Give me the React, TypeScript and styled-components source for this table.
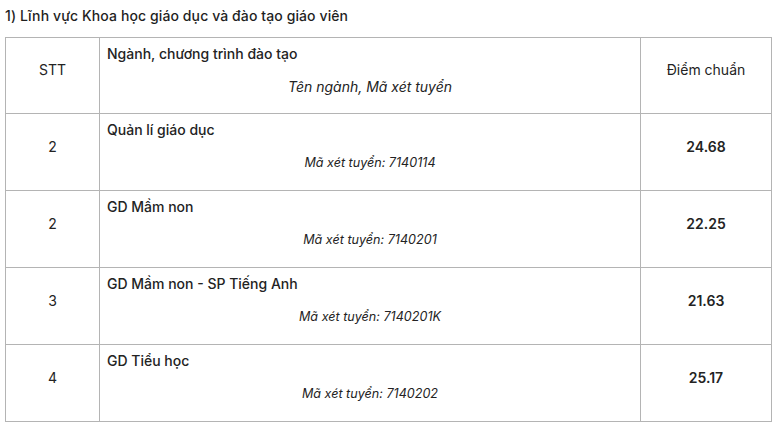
import styled, { createGlobalStyle } from "styled-components";

const GlobalStyle = createGlobalStyle`
  html, body {
    margin: 0;
    padding: 0;
    background: #ffffff;
  }
  body {
    font-family: Inter, "Liberation Sans", Arial, sans-serif;
    color: #232323;
  }
`;

const Page = styled.div`
  padding: 5px 5px 0 5px;
  width: 767px;
`;

const Title = styled.h2`
  margin: 0;
  height: 21px;
  line-height: 21px;
  font-size: 14px;
  font-weight: 500;
  letter-spacing: 0.1px;
  color: #1f1f1f;
`;

const Table = styled.table`
  margin-top: 11px;
  width: 767px;
  border-collapse: collapse;
  table-layout: fixed;
  font-size: 14px;
`;

const Row = styled.tr<{ $head?: boolean }>`
  height: ${(p) => (p.$head ? 76 : 77)}px;
`;

const Cell = styled.td<{ $bold?: boolean; $width?: number }>`
  border: 1px solid #b4b4b4;
  box-sizing: border-box;
  padding: 0 7px 12px 7px;
  vertical-align: middle;
  text-align: center;
  font-weight: ${(p) => (p.$bold ? 600 : 400)};
  ${(p) => (p.$width ? `width: ${p.$width}px;` : "")}
`;

const MajorCell = styled.td`
  border: 1px solid #b4b4b4;
  box-sizing: border-box;
  padding: 6px 7px 0 7px;
  vertical-align: top;
`;

const MajorName = styled.div`
  height: 20px;
  line-height: 20px;
  font-weight: 500;
`;

const MajorCode = styled.div<{ $small?: boolean }>`
  margin-top: 13px;
  height: 20px;
  line-height: 20px;
  font-style: italic;
  font-size: ${(p) => (p.$small ? 12.6 : 14)}px;
  text-align: center;
`;

type Major = { stt: string; name: string; code: string; score: string };

const majors: Major[] = [
  { stt: "2", name: "Quản lí giáo dục", code: "7140114", score: "24.68" },
  { stt: "2", name: "GD Mầm non", code: "7140201", score: "22.25" },
  { stt: "3", name: "GD Mầm non - SP Tiếng Anh", code: "7140201K", score: "21.63" },
  { stt: "4", name: "GD Tiểu học", code: "7140202", score: "25.17" },
];

export default function App() {
  return (
    <>
      <GlobalStyle />
      <Page>
        <Title>1) Lĩnh vực Khoa học giáo dục và đào tạo giáo viên</Title>
        <Table>
          <tbody>
            <Row $head>
              <Cell $width={94}>STT</Cell>
              <MajorCell>
                <MajorName>Ngành, chương trình đào tạo</MajorName>
                <MajorCode>Tên ngành, Mã xét tuyển</MajorCode>
              </MajorCell>
              <Cell $width={131}>Điểm chuẩn</Cell>
            </Row>
            {majors.map((m, i) => (
              <Row key={i}>
                <Cell>{m.stt}</Cell>
                <MajorCell>
                  <MajorName>{m.name}</MajorName>
                  <MajorCode $small>Mã xét tuyển: {m.code}</MajorCode>
                </MajorCell>
                <Cell $bold>{m.score}</Cell>
              </Row>
            ))}
          </tbody>
        </Table>
      </Page>
    </>
  );
}
